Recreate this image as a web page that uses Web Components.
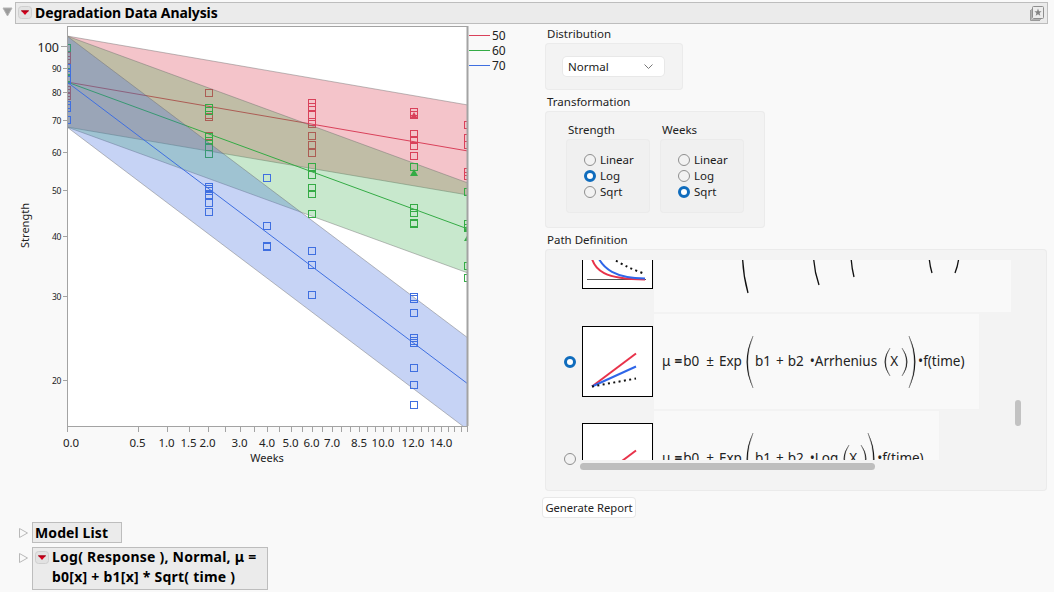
<!DOCTYPE html>
<html>
<head>
<meta charset="utf-8">
<title>Degradation Data Analysis</title>
<style>
  html, body { margin: 0; padding: 0; }
  body {
    background: #f9f9f9;
    color: #1a1a1a;
    font-family: "Noto Sans", "Open Sans", sans-serif;
    font-size: 11.5px;
    overflow: hidden;
  }
</style>
</head>
<body>
<report-outline open menu pin wide>
  <span slot="title">Degradation Data Analysis</span>
  <div style="display:flex">
    <degradation-plot></degradation-plot>
    <div style="display:flex;flex-direction:column;align-items:flex-start;gap:3px;width:510px;padding-top:1px">
      <group-box label="Distribution" style="margin-left:2px">
        <div style="padding:14px 19px 14px 18px"><drop-select>Normal</drop-select></div>
      </group-box>
      <group-box label="Transformation" style="margin-left:2px">
        <div style="display:flex;gap:10px;padding:10px 21px 15px 21px">
          <group-box label="Strength" inner>
            <div style="display:flex;flex-direction:column;width:84px;box-sizing:border-box;padding:13px 0 13px 18px">
              <radio-option>Linear</radio-option>
              <radio-option checked>Log</radio-option>
              <radio-option>Sqrt</radio-option>
            </div>
          </group-box>
          <group-box label="Weeks" inner>
            <div style="display:flex;flex-direction:column;width:84px;box-sizing:border-box;padding:13px 0 13px 18px">
              <radio-option>Linear</radio-option>
              <radio-option>Log</radio-option>
              <radio-option checked>Sqrt</radio-option>
            </div>
          </group-box>
        </div>
      </group-box>
      <group-box label="Path Definition" style="margin-left:2px">
        <path-list>
          <path-row thumb="decay" height="118" cell="357">
            <svg width="357" height="118" viewBox="654 194 357 118" fill="none" stroke="#111" stroke-width="1.3">
              <path d="M748 213Q737 253 748 293"/>
              <path d="M819 221Q808 253 819 285"/>
              <path d="M854 229Q848 253 854 277"/>
              <path d="M932 233Q926 253 932 273"/>
              <path d="M955 233Q963 253 955 273"/>
            </svg>
          </path-row>
          <path-row checked thumb="linear" height="95" cell="325">
            <math-term>μ</math-term><math-term gap="4" bold>=</math-term><math-term gap="1">b0</math-term>
            <math-term gap="7">±</math-term><math-term gap="5">Exp</math-term>
            <math-paren gap="5" size="52"></math-paren>
            <math-term gap="2">b1</math-term><math-term gap="5">+</math-term><math-term gap="4">b2</math-term>
            <math-term gap="6">•</math-term><math-term gap="0">Arrhenius</math-term>
            <math-paren gap="8" size="28"></math-paren>
            <math-term gap="0">X</math-term>
            <math-paren gap="4" size="28" close></math-paren>
            <math-paren gap="2" size="52" close></math-paren>
            <math-term gap="3">•</math-term><math-term gap="0">f(time)</math-term>
          </path-row>
          <path-row thumb="linear" height="95" cell="285">
            <math-term>μ</math-term><math-term gap="4" bold>=</math-term><math-term gap="1">b0</math-term>
            <math-term gap="7">±</math-term><math-term gap="5">Exp</math-term>
            <math-paren gap="5" size="52"></math-paren>
            <math-term gap="2">b1</math-term><math-term gap="5">+</math-term><math-term gap="4">b2</math-term>
            <math-term gap="6">•</math-term><math-term gap="0">Log</math-term>
            <math-paren gap="6" size="28"></math-paren>
            <math-term gap="0">X</math-term>
            <math-paren gap="4" size="28" close></math-paren>
            <math-paren gap="2" size="52" close></math-paren>
            <math-term gap="3">•</math-term><math-term gap="0">f(time)</math-term>
          </path-row>
        </path-list>
      </group-box>
      <action-button style="margin-top:4px">Generate Report</action-button>
    </div>
  </div>
  <report-outline style="margin-top:5px">
    <span slot="title" style="display:block;width:83px;letter-spacing:.1px">Model List</span>
  </report-outline>
  <report-outline menu style="margin-top:4px">
    <span slot="title" style="display:block;width:212px;line-height:20px;margin-top:-1px;padding-bottom:2px;letter-spacing:.24px">Log( Response ), Normal, μ =<br>b0[x] + b1[x] * Sqrt( time )</span>
  </report-outline>
</report-outline>

<script>
/**
 * Red popup menu button of a report outline.
 */
class RedMenu extends HTMLElement {
  constructor() {
    super();
    this.attachShadow({ mode: 'open' });
    this.shadowRoot.innerHTML = `
      <style>
        :host { display: block; width: 14px; height: 13px; }
        svg { display: block; }
      </style>
      <svg width="14" height="13" viewBox="0 0 14 13">
        <rect x=".5" y=".5" width="13" height="12" rx="3" fill="#e2e2e2" stroke="#cfcfcf"/>
        <path d="M3 4.5H11L7 9Z" fill="#d8001c"/>
        <path d="M3 4.5H11L10.3 5.4H3.7Z" fill="#8d0012"/>
      </svg>`;
  }
}
customElements.define('red-menu', RedMenu);

/**
 * Collapsible report section: twisty, title bar and its content.
 *
 * Attributes: open, menu, pin, wide.
 */
class ReportOutline extends HTMLElement {
  constructor() {
    super();
    this.attachShadow({ mode: 'open' });
    const open = this.hasAttribute('open');
    const wide = this.hasAttribute('wide');
    const twisty = open
      ? '<path d="M3 8H12L7.5 16Z" fill="#9c9c9c" stroke="#b4b4b4"/>'
      : '<path d="M4.5 6.5L12.5 11L4.5 15.5Z" fill="#f9f9f9" stroke="#b9b9b9"/>';

    this.shadowRoot.innerHTML = `
      <style>
        :host { display: block; }
        .head { display: flex; align-items: flex-start; }
        .twisty { flex: none; width: ${wide ? 15 : 17}px; height: 20px; }
        .bar {
          display: flex;
          align-items: flex-start;
          gap: 3px;
          box-sizing: border-box;
          background: #ebebeb;
          border: 1px solid #bdbdbd;
          font-weight: 700;
          font-size: 14px;
          line-height: 19px;
          color: #000;
          letter-spacing: -.1px;
          padding: 0 3px 0 2px;
          ${wide ? 'flex: 1; margin: 2px 6px 0 0; height: 22px;' : ''}
        }
        red-menu { margin-top: 3px; flex: none; }
        .pin { margin: 2px -1px 0 auto; flex: none; }
        .body { margin-left: 15px; }
      </style>
      <div class="head">
        <svg class="twisty" viewBox="${wide ? '0 0 15 20' : '0 0 17 20'}" width="${wide ? 15 : 17}" height="20">${twisty}</svg>
        <div class="bar">
          ${this.hasAttribute('menu') ? '<red-menu></red-menu>' : ''}
          <slot name="title"></slot>
          ${this.hasAttribute('pin') ? `
          <svg class="pin" width="16" height="17" viewBox="0 0 16 17">
            <path d="M1.5 5V15.5H11" fill="none" stroke="#9a9a9a" stroke-width="1"/>
            <path d="M2.5 4V14.5H12" fill="none" stroke="#b0b0b0" stroke-width="1"/>
            <rect x="3.5" y="1.5" width="11" height="12" rx="1" fill="#ececec" stroke="#8e8e8e"/>
            <path d="M9 3.5L10 6.2L12.6 6.3L10.6 8L11.3 10.7L9 9.2L6.7 10.7L7.4 8L5.4 6.3L8 6.2Z" fill="#858585"/>
          </svg>` : ''}
        </div>
      </div>
      ${open ? '<div class="body"><slot></slot></div>' : ''}`;
  }
}
customElements.define('report-outline', ReportOutline);

/**
 * Degradation plot: prediction bands, fitted lines and data points
 * for three temperatures, on a log strength by sqrt weeks grid.
 */
class DegradationPlot extends HTMLElement {
  constructor() {
    super();
    this.attachShadow({ mode: 'open' });

    const L = 67, R = 467, T = 26, B = 426;
    const series = [
      {
        color: '#d9415a', band: 'rgba(220,60,80,.3)',
        top: 105, bottom: 195, mid: 151,
        points: [
          [67, [56, 60, 90, 93, 96]],
          [209, [93, 115, 117, 136]],
          [312, [103, 107, 115, 122, 124, 136, 145, 153]],
          [414, [112, 115, 134, 140, 146, 156]],
          [468, [125, 138, 145, 172, 176]],
        ],
        tris: [[414, 116]],
      },
      {
        color: '#34ab45', band: 'rgba(50,170,70,.27)',
        top: 183, bottom: 273, mid: 229,
        points: [
          [67, [48, 72, 78]],
          [209, [108, 111, 137, 141, 147, 154]],
          [312, [167, 175, 188, 194, 214]],
          [414, [167, 208, 213, 223, 224]],
          [468, [192, 224, 228, 266, 278]],
        ],
        tris: [[414, 173], [468, 228], [468, 238]],
      },
      {
        color: '#3f6fe0', band: 'rgba(65,108,222,.3)',
        top: 338, bottom: 430, mid: 384,
        points: [
          [67, [68, 73, 80, 105, 108, 120]],
          [209, [187, 189, 191, 195, 203, 212]],
          [267, [178, 226, 246, 247]],
          [312, [251, 265, 295]],
          [414, [297, 299, 313, 338, 341, 343, 368, 385, 405]],
        ],
        tris: [],
      },
    ];

    let plot = '';
    for (const s of series) {
      plot += `<path d="M${L} 36L${R + 1} ${s.top}V${s.bottom}L${L} 127Z" fill="${s.band}"/>`;
      plot += `<path d="M${L} 36L${R + 1} ${s.top}M${L} 127L${R + 1} ${s.bottom}" fill="none" stroke="rgba(110,110,110,.45)"/>`;
      plot += `<path d="M${L} 82L${R + 1} ${s.mid}" fill="none" stroke="${s.color}"/>`;
      for (const [x, ys] of s.points) {
        for (const y of ys) {
          plot += `<rect x="${x - 3.5}" y="${y - 3.5}" width="7" height="7" fill="none" stroke="${s.color}"/>`;
        }
      }
      for (const [x, y] of s.tris) {
        plot += `<path d="M${x} ${y - 4}L${x + 4} ${y + 3}H${x - 4}Z" fill="${s.color}"/>`;
      }
    }

    // x axis: a tick every half week on the sqrt scale
    let ticks = '';
    for (let w = 0; w <= 16; w += 0.5) {
      const x = Math.round(L + 100 * Math.sqrt(w)) + 0.5;
      ticks += `<path d="M${x} ${B}v6"/>`;
    }
    const xLabels = [['0.0', 71], ['0.5', 137.5], ['1.0', 166.5], ['1.5', 188.5], ['2.0', 207.5],
      ['3.0', 239.5], ['4.0', 267], ['5.0', 290.5], ['6.0', 311.5], ['7.0', 332], ['8.5', 359],
      ['10.0', 383], ['12.0', 413], ['14.0', 441]];
    const xText = xLabels.map(([t, x]) =>
      `<text x="${x}" y="447" text-anchor="middle" font-size="11.5">${t}</text>`).join('');

    // y axis: log scale
    let yText = '';
    for (const v of [100, 90, 80, 70, 60, 50, 40, 30, 20]) {
      const y = Math.round(46 + 207.5 * Math.log(100 / v)) + 0.5;
      const big = v === 100;
      ticks += `<path d="M${L} ${y}h-${big ? 6 : 4}"/>`;
      yText += `<text x="${big ? 59 : 61}" y="${y + (big ? 5 : 3)}" text-anchor="end" font-size="${big ? 12.5 : 8.5}" ${big ? '' : 'letter-spacing="-.4"'}>${v}</text>`;
    }

    const legend = [['50', 35, '#d9415a'], ['60', 50, '#34ab45'], ['70', 65, '#3f6fe0']].map(([t, y, c]) =>
      `<path d="M469 ${y + .5}h21" stroke="${c}" fill="none"/>
       <text x="492" y="${y + 4.5}" font-size="12">${t}</text>`).join('');

    this.shadowRoot.innerHTML = `
      <style>
        :host { display: block; flex: none; width: 528px; }
        svg { display: block; font-family: inherit; }
        text { fill: #222; }
      </style>
      <svg width="528" height="474" viewBox="15 24 528 474">
        <defs><clipPath id="plot-clip"><rect x="${L}" y="${T}" width="${R - L + 1}" height="${B - T}"/></clipPath></defs>
        <rect x="${L}" y="${T}" width="${R - L}" height="${B - T}" fill="#fff"/>
        <g clip-path="url(#plot-clip)">${plot}</g>
        <g stroke="#a3a3a3" fill="none">
          <path d="M${L + .5} ${T}V${B + .5}H${R + 1}"/>
          <path d="M${L} ${T + .5}H${R}"/>
          <path d="M${R + .5} ${T}V${B}" stroke-width="2"/>
          ${ticks}
        </g>
        ${yText}${xText}${legend}
        <text x="267" y="462" text-anchor="middle" font-size="11">Weeks</text>
        <text transform="translate(29 225.5) rotate(-90)" text-anchor="middle" font-size="11">Strength</text>
      </svg>`;
  }
}
customElements.define('degradation-plot', DegradationPlot);

/**
 * Labelled rounded box around a group of controls.
 */
class GroupBox extends HTMLElement {
  constructor() {
    super();
    this.attachShadow({ mode: 'open' });
    this.shadowRoot.innerHTML = `
      <style>
        :host { display: block; width: max-content; }
        .label { height: 18px; line-height: 18px; padding-left: 2px; color: #222; }
        .box {
          background: ${this.hasAttribute('inner') ? '#f0f0f0' : '#f3f3f3'};
          border-radius: 4px;
          box-shadow: inset 0 0 0 1px #ebebeb;
        }
      </style>
      <div class="label">${this.getAttribute('label')}</div>
      <div class="box"><slot></slot></div>`;
  }
}
customElements.define('group-box', GroupBox);

/**
 * Combo box with its closed chevron.
 */
class DropSelect extends HTMLElement {
  constructor() {
    super();
    this.attachShadow({ mode: 'open' });
    this.shadowRoot.innerHTML = `
      <style>
        :host {
          display: flex;
          align-items: center;
          justify-content: space-between;
          box-sizing: border-box;
          width: 101px;
          height: 19px;
          padding: 0 11px 0 5px;
          background: #fff;
          border-radius: 4px;
          box-shadow: 0 0 0 1px #e8e8e8;
        }
        svg { display: block; }
      </style>
      <slot></slot>
      <svg width="9" height="5" viewBox="0 0 9 5"><path d="M.5 .5L4.5 4.5L8.5 .5" fill="none" stroke="#767676"/></svg>`;
  }
}
customElements.define('drop-select', DropSelect);

/**
 * Radio mark with an optional label.
 */
class RadioOption extends HTMLElement {
  constructor() {
    super();
    this.attachShadow({ mode: 'open' });
    const on = this.hasAttribute('checked');
    this.shadowRoot.innerHTML = `
      <style>
        :host { display: flex; align-items: center; gap: 4px; height: 16px; line-height: 16px; }
        .dot {
          flex: none;
          box-sizing: border-box;
          width: 12px;
          height: 12px;
          border-radius: 50%;
          background: ${on ? '#fff' : '#f2f2f2'};
          border: ${on ? '3px solid #0f6cbd' : '1.3px solid #8f8f8f'};
        }
      </style>
      <span class="dot"></span><slot></slot>`;
  }
}
customElements.define('radio-option', RadioOption);

/**
 * Scrolled list of model paths with its overlay scrollbars.
 */
class PathList extends HTMLElement {
  constructor() {
    super();
    this.attachShadow({ mode: 'open' });
    this.shadowRoot.innerHTML = `
      <style>
        :host { display: block; position: relative; width: 502px; height: 242px; }
        .view { position: absolute; inset: 11px 0 21px 0; overflow: hidden; }
        .rows { margin-top: -66px; display: flex; flex-direction: column; gap: 2px; }
        .track { position: absolute; left: 35px; right: 1px; top: 211px; height: 11px; background: #f3f3f3; }
        .hbar { position: absolute; left: 0; top: 3px; width: 295px; height: 7px; border-radius: 4px; background: #bebebe; }
        .vbar { position: absolute; left: 470px; top: 151px; width: 6px; height: 26px; border-radius: 3px; background: #c2c2c2; }
      </style>
      <div class="view"><div class="rows"><slot></slot></div></div>
      <div class="track"><div class="hbar"></div></div>
      <div class="vbar"></div>`;
  }
}
customElements.define('path-list', PathList);

/**
 * One path choice: radio, thumbnail of the curves and its formula.
 */
class PathRow extends HTMLElement {
  constructor() {
    super();
    this.attachShadow({ mode: 'open' });
    const thumbs = {
      decay: `
        <path d="M4 60.5H63" stroke="#555" stroke-width="1.2"/>
        <path d="M8 36C11 52 22 60 62 60.5" stroke="#e8324a" stroke-width="2" fill="none"/>
        <path d="M14 36C20 50 32 59 62 59.5" stroke="#2f66e8" stroke-width="2" fill="none"/>
        <path d="M24 36Q40 47 62 55" stroke="#111" stroke-width="2" stroke-dasharray="2 3.4" fill="none"/>`,
      linear: `
        <path d="M9 59.5L53 26.5" stroke="#e8324a" stroke-width="2"/>
        <path d="M9 59.5L53 39.5" stroke="#2f66e8" stroke-width="2"/>
        <path d="M9 59.5L53 51.5" stroke="#111" stroke-width="2" stroke-dasharray="2 3.4"/>`,
    };
    this.shadowRoot.innerHTML = `
      <style>
        :host {
          display: grid;
          grid-template-columns: 12px 71px auto;
          column-gap: 6px;
          align-items: center;
          justify-content: start;
          height: ${this.getAttribute('height')}px;
          padding-left: 19px;
          font-size: 13.5px;
          color: #222;
        }
        .thumb { display: block; width: 71px; height: 71px; box-sizing: border-box; background: #fff; border: 1px solid #000; }
        .cell {
          display: flex;
          align-items: center;
          align-self: stretch;
          box-sizing: border-box;
          width: ${this.getAttribute('cell')}px;
          margin-left: -5px;
          padding-left: 8px;
          background: #f9f9f9;
        }
        ::slotted(svg) { margin-left: -8px; flex: none; }
      </style>
      <radio-option ${this.hasAttribute('checked') ? 'checked' : ''}></radio-option>
      <svg class="thumb" viewBox="0 0 69 69">${thumbs[this.getAttribute('thumb')]}</svg>
      <div class="cell"><slot></slot></div>`;
  }
}
customElements.define('path-row', PathRow);

/**
 * Formula term, with a gap to the one before it.
 */
class MathTerm extends HTMLElement {
  constructor() {
    super();
    this.attachShadow({ mode: 'open' });
    this.shadowRoot.innerHTML = `
      <style>
        :host {
          display: block;
          flex: none;
          margin-left: ${this.getAttribute('gap') || 0}px;
          margin-bottom: 2px;
          ${this.hasAttribute('bold') ? 'font-weight: 700;' : ''}
        }
      </style>
      <slot></slot>`;
  }
}
customElements.define('math-term', MathTerm);

/**
 * Stretched formula parenthesis.
 */
class MathParen extends HTMLElement {
  constructor() {
    super();
    this.attachShadow({ mode: 'open' });
    const h = +this.getAttribute('size');
    const w = h > 30 ? 6 : 5;
    const close = this.hasAttribute('close');
    const d = close
      ? `M0 0Q${w * 2.1} ${h / 2} 0 ${h}Q${w * 1.75} ${h / 2} 0 0Z`
      : `M${w} 0Q${-w * 1.1} ${h / 2} ${w} ${h}Q${-w * .75} ${h / 2} ${w} 0Z`;
    this.shadowRoot.innerHTML = `
      <style>
        :host { display: block; flex: none; height: ${h}px; width: ${w}px; margin-left: ${this.getAttribute('gap') || 0}px; }
        svg { display: block; overflow: visible; }
      </style>
      <svg width="${w}" height="${h}"><path d="${d}" fill="#111" stroke="#111" stroke-width=".25"/></svg>`;
  }
}
customElements.define('math-paren', MathParen);

/**
 * Push button of the launch dialog.
 */
class ActionButton extends HTMLElement {
  constructor() {
    super();
    this.attachShadow({ mode: 'open' });
    this.shadowRoot.innerHTML = `
      <style>
        :host { display: block; }
        button {
          display: block;
          box-sizing: border-box;
          width: 92px;
          height: 19px;
          padding: 0;
          font: inherit;
          font-size: 11.2px;
          color: #222;
          background: #fff;
          border: none;
          border-radius: 3px;
          box-shadow: 0 0 0 1px #e8e8e8;
        }
      </style>
      <button><slot></slot></button>`;
  }
}
customElements.define('action-button', ActionButton);
</script>
</body>
</html>
